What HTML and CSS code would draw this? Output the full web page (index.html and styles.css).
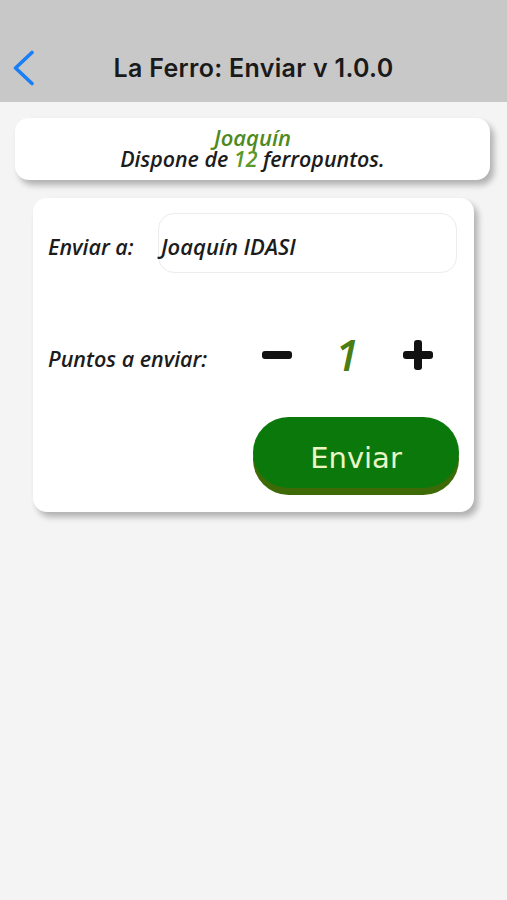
FILE: index.html
```html
<!DOCTYPE html>
<html lang="es">
<head>
<meta charset="utf-8">
<title>La Ferro: Enviar</title>
<link rel="stylesheet" href="styles.css">
</head>
<body>
<header class="navbar">
  <div class="nav-left">
    <svg class="back" viewBox="0 0 24 36" width="24" height="36" aria-hidden="true">
      <path d="M20 2.5 L3.5 18 L20 33.5" fill="none" stroke="#1a7ef5" stroke-width="3.6" stroke-linecap="round" stroke-linejoin="round"/>
    </svg>
  </div>
  <h1 class="nav-title">La Ferro: Enviar v 1.0.0</h1>
  <div class="nav-right"></div>
</header>

<main class="content">
  <section class="card summary">
    <p class="user-name">Joaquín</p>
    <p class="balance">Dispone de <span class="green">12</span> ferropuntos.</p>
  </section>

  <section class="card form">
    <div class="row row-to">
      <span class="label label-to">Enviar a:</span>
      <div class="field">Joaquín IDASI</div>
    </div>
    <div class="row row-points">
      <span class="label label-points">Puntos a enviar:</span>
      <div class="stepper">
        <span class="minus"></span>
        <span class="count">1</span>
        <span class="plus"></span>
      </div>
    </div>
    <div class="row row-action">
      <button class="send">Enviar</button>
    </div>
  </section>
</main>
</body>
</html>
```
FILE: styles.css
```css
* { box-sizing: border-box; }

html, body {
  margin: 0;
  padding: 0;
}

body {
  background: #f4f4f4;
  font-family: "Open Sans", "Noto Sans", sans-serif;
  color: #1c1c1c;
  width: 507px;
  min-height: 900px;
}

.navbar {
  height: 102px;
  padding-top: 34px;
  background: #c8c8c8;
  display: grid;
  grid-template-columns: 1fr auto 1fr;
  align-items: center;
}

.nav-left {
  padding-left: 12px;
  display: flex;
  align-items: center;
}

.back { display: block; }

.nav-title {
  margin: 0;
  font-family: "Inter", "Roboto", sans-serif;
  font-weight: 600;
  font-size: 25px;
  color: #1a1a1a;
  letter-spacing: 0.3px;
}

.content {
  display: flex;
  flex-direction: column;
}

.card {
  background: #ffffff;
  border-radius: 14px;
  box-shadow: 4px 5px 6px rgba(0, 0, 0, 0.28);
}

.summary {
  margin: 16px 0 0 15px;
  width: 475px;
  height: 62px;
  padding-top: 8px;
  text-align: center;
  font-style: italic;
  font-weight: 600;
  font-size: 21px;
  line-height: 22px;
}

.summary p { margin: 0; }

.user-name { color: #4e8a22; font-size: 22px; }

.balance { font-size: 21.4px; }

.green { color: #5a982a; }

.form {
  margin: 18px 0 0 33px;
  width: 441px;
  height: 314px;
  padding: 15px 15px 24px 15px;
  display: flex;
  flex-direction: column;
}

.row {
  display: flex;
  align-items: center;
}

.label {
  font-style: italic;
  font-weight: 600;
  font-size: 21.5px;
  padding-top: 6px;
}

.label-to { width: 110px; }

.field {
  width: 299px;
  height: 60px;
  border: 1px solid #ececec;
  border-radius: 16px;
  padding: 6px 0 0 2px;
  display: flex;
  align-items: center;
  font-style: italic;
  font-weight: 600;
  font-size: 22px;
}

.row-points {
  margin-top: 52px;
  height: 60px;
}

.label-points { width: 214px; }

.stepper {
  display: flex;
  align-items: center;
}

.minus {
  width: 30px;
  height: 8px;
  border-radius: 3px;
  background: #111;
}

.count {
  width: 40px;
  margin: 0 36px 0 35px;
  text-align: center;
  font-style: italic;
  font-weight: 600;
  font-size: 43px;
  line-height: 60px;
  color: #4a7d12;
}

.plus {
  position: relative;
  width: 30px;
  height: 30px;
}

.plus::before,
.plus::after {
  content: "";
  position: absolute;
  background: #111;
  border-radius: 3px;
}

.plus::before {
  left: 0;
  right: 0;
  top: 11px;
  height: 8px;
}

.plus::after {
  top: 0;
  bottom: 0;
  left: 11px;
  width: 8px;
}

.row-action {
  margin-top: 32px;
  justify-content: flex-end;
}

.send {
  width: 206px;
  height: 71px;
  border: none;
  border-radius: 36px;
  background: #0b780b;
  box-shadow: 0 7px 0 #3d6a06;
  color: #eaf6c6;
  font-family: "DejaVu Sans", sans-serif;
  font-size: 29px;
  padding: 10px 0 0 0;
  cursor: pointer;
}
```
